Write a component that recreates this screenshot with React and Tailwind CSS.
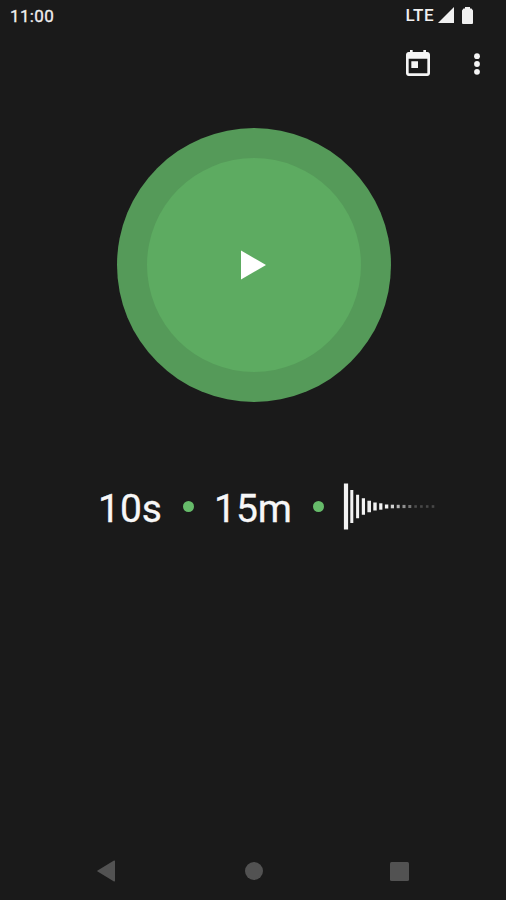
const bars = [
  { h: 46, w: 4.2, o: 0.95 },
  { h: 33, w: 3, o: 0.95 },
  { h: 23.5, w: 3, o: 0.95 },
  { h: 16.5, w: 3.2, o: 0.95 },
  { h: 11.5, w: 3.6, o: 0.92 },
  { h: 8, w: 3.4, o: 0.95 },
  { h: 6.4, w: 3.2, o: 0.95 },
  { h: 4, w: 3.4, o: 0.95 },
  { h: 3.6, w: 3.2, o: 0.8 },
  { h: 3.4, w: 3, o: 0.68 },
  { h: 3.2, w: 3, o: 0.52 },
  { h: 3, w: 3, o: 0.4 },
  { h: 2.6, w: 2.6, o: 0.22 },
  { h: 2.6, w: 2.6, o: 0.2 },
  { h: 2.6, w: 2.6, o: 0.2 },
  { h: 2.6, w: 2.6, o: 0.2 },
];

function StatusBar() {
  return (
    <div className="flex h-8 items-center justify-between pl-[10px] pr-[33px] text-[17px] leading-8 text-[#f0f0f0]">
      <span className="tracking-[0.35px] [-webkit-text-stroke:0.3px_#f0f0f0]">11:00</span>
      <div className="flex items-center">
        <span className="-translate-y-px font-medium tracking-[0.5px]">LTE</span>
        <svg className="ml-[4px] h-4 w-4 -translate-y-px" viewBox="0 0 16 16" fill="currentColor">
          <path d="M16 0v16H0z" />
        </svg>
        <svg className="ml-2 h-[17px] w-[11px] -translate-y-px" viewBox="0 0 11 17" fill="currentColor">
          <path d="M3 0h5v1.5h1.5L11 3.5V16a1 1 0 0 1-1 1H1a1 1 0 0 1-1-1V3.5L1.5 1.5H3z" />
        </svg>
      </div>
    </div>
  );
}

function Toolbar() {
  return (
    <div className="flex h-16 items-center justify-end gap-[27px] pr-[13px] text-[#f5f5f5]">
      <button aria-label="Schedule">
        <svg className="h-8 w-8" viewBox="0 0 24 24" fill="currentColor">
          <path d="M19 3h-1V1.5h-2V3H8V1.5H6V3H5c-1.11 0-1.99.9-1.99 2L3 19c0 1.1.89 2 2 2h14c1.1 0 2-.9 2-2V5c0-1.1-.9-2-2-2zm0 16H5V8h14v11zM7 10h5v5H7z" />
        </svg>
      </button>
      <button aria-label="More options">
        <svg className="h-8 w-8" viewBox="0 0 32 32" fill="currentColor">
          <circle cx="16" cy="8.2" r="2.9" />
          <circle cx="16" cy="16" r="2.9" />
          <circle cx="16" cy="23.8" r="2.9" />
        </svg>
      </button>
    </div>
  );
}

function Dot() {
  return <span className="h-[11px] w-[11px] rounded-full bg-[#66bb6a]" />;
}

function FadeOut() {
  return (
    <svg className="h-12 w-[94px]" viewBox="0 0 94 48" fill="#fff">
      {bars.map((b, i) => (
        <rect
          key={i}
          x={3 + i * 5.8 - b.w / 2}
          y={23.5 - b.h / 2}
          width={b.w}
          height={b.h}
          opacity={b.o}
        />
      ))}
    </svg>
  );
}

export default function App() {
  return (
    <div className="flex h-[900px] w-[506px] flex-col overflow-hidden bg-[#1a1a1a] font-['Roboto',sans-serif]">
      <StatusBar />
      <Toolbar />

      {/* Play button */}
      <button
        aria-label="Play"
        className="mt-8 ml-[117px] flex h-[274px] w-[274px] items-center justify-center rounded-full bg-[#559a59]"
      >
        <span className="flex h-[214px] w-[214px] items-center justify-center rounded-full bg-[#5dab61]">
          <svg className="mr-px h-[30px] w-[25px]" viewBox="0 0 25 30" fill="#fff">
            <path d="M0 .5v29L25 15z" />
          </svg>
        </span>
      </button>

      {/* Interval, duration and fade */}
      <div className="mt-[81px] ml-[98px] flex h-[47px] items-center text-[39px] leading-[48px] text-[#f7f7f7]">
        <span className="w-[85px] translate-y-[2px] [-webkit-text-stroke:0.3px_#f7f7f7]">10s</span>
        <Dot />
        <span className="w-[119px] translate-y-[2px] pl-[20px] [-webkit-text-stroke:0.3px_#f7f7f7]">15m</span>
        <Dot />
        <div className="ml-[19px]">
          <FadeOut />
        </div>
      </div>

      {/* Navigation bar */}
      <div className="mt-auto mb-[18px] flex h-[22px] items-center pl-[97px] text-[#525252]">
        <svg className="h-[22px] w-[18px]" viewBox="0 0 18 22" fill="currentColor">
          <path d="M17 .6a.8.8 0 0 1 1 .8v19.2a.8.8 0 0 1-1 .8L.6 11.6a.7.7 0 0 1 0-1.2z" />
        </svg>
        <span className="ml-[129.5px] h-[18.5px] w-[18.5px] rounded-full bg-current" />
        <span className="ml-[127px] h-[19px] w-[19px] rounded-[1.5px] bg-current" />
      </div>
    </div>
  );
}
